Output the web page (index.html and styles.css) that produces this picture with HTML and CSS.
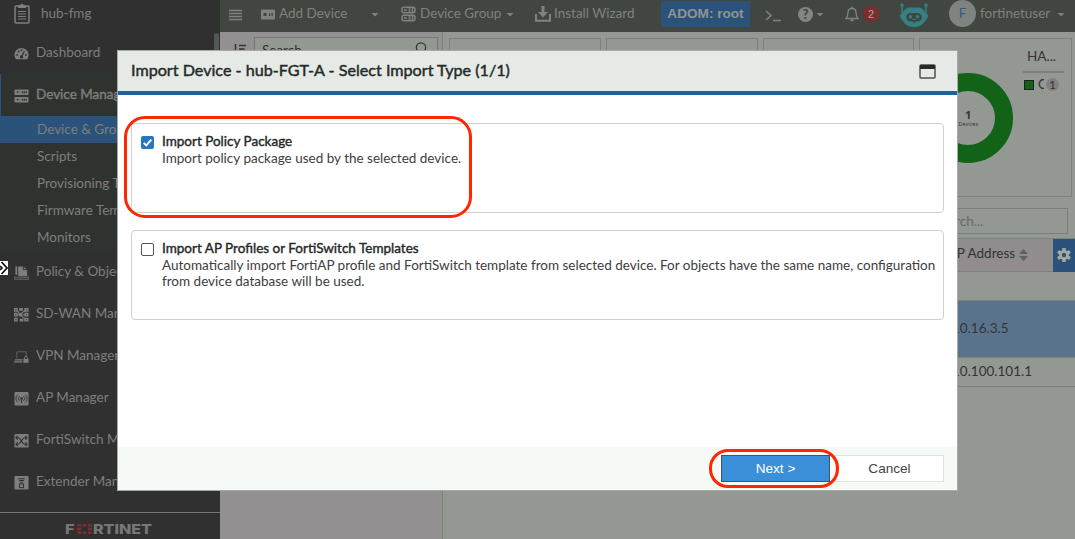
FILE: index.html
```
<!DOCTYPE html>
<html lang="en">
<head>
<meta charset="utf-8">
<title>hub-fmg</title>
<link rel="stylesheet" href="styles.css">
</head>
<body>
<div class="app">
  <aside class="sidebar">
    <div class="host">
      <svg class="host-icon" width="18" height="22" viewBox="0 0 18 22"><rect x="2" y="3" width="14" height="17" rx="1" fill="none" stroke="currentColor" stroke-width="1.5"/><path d="M5 5V2.5h2.2a1.8 1.8 0 0 1 3.6 0H13V5z" fill="currentColor"/><path d="M5 8.5h8M5 11h8M5 13.5h8M5 16h8" stroke="currentColor" stroke-width="1"/></svg>
      <span>hub-fmg</span>
    </div>
    <nav class="nav">
      <div class="nav-item"><svg class="nav-icon" viewBox="0 0 16 16"><path d="M2 14A7.5 7.5 0 1 1 14 14z" fill="currentColor"/><g fill="#303030"><circle cx="3.4" cy="9.5" r="1"/><circle cx="5" cy="5.8" r="1"/><circle cx="8" cy="4.2" r="1"/><circle cx="12.7" cy="9.5" r="1"/><circle cx="8" cy="11.6" r="1.8"/></g><path d="M8 11.5l3-6" stroke="#303030" stroke-width="1.3"/></svg><span>Dashboard</span></div>
      <div class="nav-item open"><svg class="nav-icon" viewBox="0 0 16 16"><rect x=".5" y="1.5" width="15" height="6" rx="1" fill="currentColor"/><rect x=".5" y="9.5" width="15" height="6" rx="1" fill="currentColor"/><path d="M3 4.5h2M3 12.5h2M9 3.5v2M11 3.5v2M13 3.5v2M9 11.5v2M11 11.5v2M13 11.5v2" stroke="#2f332f" stroke-width="1.3"/></svg><span>Device Manager</span></div>
      <div class="subnav">
        <div class="sub selected">Device &amp; Groups</div>
        <div class="sub">Scripts</div>
        <div class="sub">Provisioning Templates</div>
        <div class="sub">Firmware Templates</div>
        <div class="sub">Monitors</div>
      </div>
      <div class="nav-item"><svg class="nav-icon" viewBox="0 0 16 16"><path d="M1.500 1.500h2v9h-2zM4.500 1.500H10L14 5v7H4.500z" fill="currentColor"/><path d="M10 1.500V5h4" fill="none" stroke="#303030"/><path d="M.5 11.500v4h15v-4" fill="none" stroke="currentColor" stroke-width="1" opacity=".6"/><path d="M1 13.500h14" stroke="currentColor" stroke-width="1.500" opacity=".6"/></svg><span>Policy &amp; Objects</span></div>
      <div class="nav-item"><svg class="nav-icon" viewBox="0 0 16 16"><g fill="currentColor"><path d="M0 1h4v4H0zM5.500 1h4v3h-4zM11 1h4.500v4H11zM0 6.200h4v4H0zM11 6.200h4.500v4H11zM0 11.500h4v4H0zM6 12.500h4v3H6zM11 11.500h4.500v4H11z"/><circle cx="6.500" cy="8.200" r="2"/></g><path d="M6.500 8.200L12 3.500M6.500 8.200H12M6.500 8.200l5.500 5M3 3l3.500 5" stroke="currentColor" stroke-width="1.200"/><path d="M1.500 3h1M1.500 8.200h1M1.500 13.500h1M13 3h1M13 8.200h1M13 13.500h1" stroke="#303030" stroke-width="1.200"/></svg><span>SD-WAN Manager</span></div>
      <div class="nav-item"><svg class="nav-icon" viewBox="0 0 16 16"><path d="M3 10V3h10v5" fill="none" stroke="currentColor" opacity=".65"/><path d="M1 11h8v1.200H1zM0 13h9v1.500H0z" fill="currentColor"/><rect x="10" y="10.500" width="5.500" height="4.200" fill="currentColor"/><path d="M11.300 10.500V9.300a1.500 1.500 0 0 1 3 0v1.200" fill="none" stroke="currentColor"/></svg><span>VPN Manager</span></div>
      <div class="nav-item"><svg class="nav-icon" viewBox="0 0 16 16"><rect x=".5" y="1" width="15" height="14.500" rx="1" fill="currentColor"/><g fill="none" stroke="#303030" stroke-width="1"><circle cx="8" cy="8" r="1" fill="#303030"/><path d="M5.800 5.500a3.600 3.600 0 0 0 0 5M10.200 5.500a3.600 3.600 0 0 1 0 5M3.800 4a6 6 0 0 0 0 8M12.200 4a6 6 0 0 1 0 8M8 9v4"/></g></svg><span>AP Manager</span></div>
      <div class="nav-item"><svg class="nav-icon" viewBox="0 0 16 16"><rect x=".5" y="1" width="15" height="14.500" rx="1" fill="currentColor"/><path d="M2 5h2.500c2.500 0 4 7 7 7H14M2 12h2.500c2.500 0 4-7 7-7H14M12 3l2 2-2 2M12 10l2 2-2 2M4 3L2 5l2 2M4 10l-2 2 2 2" fill="none" stroke="#303030" stroke-width="1.100"/></svg><span>FortiSwitch Manager</span></div>
      <div class="nav-item"><svg class="nav-icon" viewBox="0 0 16 16"><rect x=".5" y="1" width="15" height="14.500" rx="1" fill="currentColor"/><path d="M4.500 4h7M5.500 6h5" stroke="#303030" stroke-width="1.100"/><path d="M6.500 7.500h3L8 9z" fill="#303030"/><rect x="5.800" y="9.500" width="4.400" height="4" fill="none" stroke="#303030"/></svg><span>Extender Manager</span></div>
    </nav>
    <div class="brand">
      <span class="brand-f">F</span><svg width="15" height="10" viewBox="0 0 15 10"><path d="M2 0h2.500v2.500H0V2a2 2 0 0 1 2-2zM6 0h3.500v2.500H6zM11 0h2a2 2 0 0 1 2 2v.5h-4zM0 3.800h4v2.500H0zM11 3.800h4v2.500h-4zM0 7.500h4.500V10H2a2 2 0 0 1-2-2zM6 7.500h3.500V10H6zM11 7.500h4V8a2 2 0 0 1-2 2h-2z" fill="#7c302c"/></svg><span class="brand-r">RTINET</span>
    </div>
    <div class="scroll-thumb"></div>
    <div class="edge-cursor"><svg width="9" height="14" viewBox="0 0 9 14"><path d="M1.500 1l5.500 6-5.500 6M0 5l2 2-2 2" fill="none" stroke="#111" stroke-width="1.700"/></svg></div>
  </aside>
  <main class="main">
    <header class="topbar">
      <svg class="burger" width="13" height="12" viewBox="0 0 13 12"><path d="M0 1.500h13M0 4.500h13M0 7.500h13M0 10.500h13" stroke="currentColor" stroke-width="1.300"/></svg>
      <div class="tool add"><svg width="14" height="11" viewBox="0 0 14 11"><rect y=".5" width="14" height="10" rx="1" fill="currentColor"/><path d="M2.500 4h3v3h-3zM8 4h1.300v3H8zM10.500 4h1.300v3h-1.300z" fill="#41463f"/></svg><span>Add Device</span><i class="caret"></i></div>
      <div class="tool group"><svg width="15" height="16" viewBox="0 0 15 16"><rect x="1" y="1.200" width="13" height="5.600" rx="2" fill="none" stroke="currentColor" stroke-width="1.500"/><rect x="1" y="9.200" width="13" height="5.600" rx="2" fill="none" stroke="currentColor" stroke-width="1.500"/><path d="M3 4h3M8.500 2v4M11.500 2v4M3 12h3M8.500 10v4M11.500 10v4" stroke="currentColor" stroke-width="1.500"/></svg><span>Device Group</span><i class="caret"></i></div>
      <div class="tool install"><svg width="16" height="16" viewBox="0 0 16 16"><path d="M1 8v6.800h14V8" fill="none" stroke="currentColor" stroke-width="2"/><path d="M6.500 0h3v6H13l-5 5.500L3 6h3.500z" fill="currentColor"/></svg><span>Install Wizard</span></div>
      <div class="adom">ADOM: root</div>
      <svg class="term" width="17" height="12" viewBox="0 0 17 12"><path d="M1 1l5 4.500L1 10M8 10.500h8" fill="none" stroke="currentColor" stroke-width="1.600"/></svg>
      <div class="help"><b>?</b><i class="caret"></i></div>
      <div class="alerts"><svg width="14" height="16" viewBox="0 0 14 16"><path d="M1 12.500c1.500-1.500 2-2.500 2-6C3 4 4.500 2.500 7 2.500S11 4 11 6.500c0 3.500.5 4.500 2 6z" fill="none" stroke="currentColor" stroke-width="1.300"/><path d="M7 .5v2" stroke="currentColor" stroke-width="1.500"/><path d="M5 13.500h4a2 2 0 0 1-4 0z" fill="currentColor"/></svg><span class="count">2</span></div>
      <svg class="bot" width="30" height="24" viewBox="0 0 30 24"><g fill="#358084"><circle cx="3" cy="2" r="1.800"/><circle cx="27" cy="2" r="1.800"/><path d="M2.300 3h1.500v9H2.300zM26.200 3h1.500v9h-1.500z"/><path d="M11 4.500h8c5 0 8 4.500 8 8.500 0 6-4 11-12 11S3 19 3 13c0-4 3-8.500 8-8.500z"/><path d="M.5 12.500l3-3v9zM29.500 12.500l-3-3v9z"/></g><path d="M11.500 10h7a4.300 4.300 0 0 1 0 8.600h-1.800l-2.700 2.200v-2.200h-2.500a4.300 4.300 0 0 1 0-8.600z" fill="#414641"/><circle cx="11.500" cy="13.800" r="1.700" fill="#358084"/><circle cx="18.500" cy="13.800" r="1.700" fill="#358084"/><path d="M13.300 16q1.700 1.500 3.400 0" fill="none" stroke="#358084"/></svg>
      <div class="user"><span class="avatar">F</span><span>fortinetuser</span><i class="caret"></i></div>
    </header>
    <div class="workspace">
      <section class="tree">
        <svg class="sort" width="12" height="12" viewBox="0 0 12 12"><path d="M1.500 0v12M5 1.500h7M5 5h5.500M5 8.500h3" stroke="#333" stroke-width="1.500"/></svg>
        <div class="tree-search"><span>Search...</span><svg width="12" height="13" viewBox="0 0 12 13"><circle cx="6" cy="5.500" r="4.700" fill="none" stroke="#333" stroke-width="1.200"/><path d="M9 9l3 3" stroke="#333"/></svg></div>
      </section>
      <section class="content">
        <div class="cards">
          <div class="card"></div><div class="card"></div><div class="card"></div>
          <div class="card ha">
            <svg class="donut" width="92" height="92" viewBox="0 0 92 92"><circle cx="46" cy="46" r="36" fill="none" stroke="#126218" stroke-width="18"/></svg>
            <div class="donut-label"><b>1</b><small>Devices</small></div>
            <div class="legend"><div class="legend-title">HA...</div><div class="legend-row"><i class="swatch"></i><span class="clip">C</span><span class="pill">1</span></div></div>
          </div>
        </div>
        <div class="filter"><div class="filter-input">Search...</div></div>
        <div class="thead"><span>IP Address</span><svg class="sorter" width="9" height="12" viewBox="0 0 9 12"><path d="M4.500 0L9 5H0zM4.500 12L0 7h9z" fill="#5f6360"/></svg><div class="gear"><svg width="14" height="14" viewBox="0 0 14 14"><g fill="#a3a8a3"><circle cx="7" cy="7" r="5"/><path d="M5.300 0h3.400v14H5.300z"/><path d="M5.300 0h3.400v14H5.300z" transform="rotate(60 7 7)"/><path d="M5.300 0h3.400v14H5.300z" transform="rotate(120 7 7)"/></g><circle cx="7" cy="7" r="2.200" fill="#2b527a"/></svg></div></div>
        <div class="row blank"></div>
        <div class="row active">10.16.3.5</div>
        <div class="row last">10.100.101.1</div>
      </section>
    </div>
  </main>
  <div class="dialog">
    <div class="dialog-head"><h1>Import Device - hub-FGT-A - Select Import Type (1/1)</h1><svg width="17" height="15" viewBox="0 0 17 15"><rect x="1" y="1" width="15" height="13" rx="1" fill="none" stroke="#4c514d" stroke-width="1.500"/><path d="M1 1h15v4H1z" fill="#252b28"/></svg></div>
    <div class="dialog-body">
      <div class="option"><span class="check on"><svg width="13" height="13" viewBox="0 0 13 13"><path d="M2.700 6.800l2.600 2.600 5-5.800" fill="none" stroke="#fff" stroke-width="1.900"/></svg></span><div><div class="option-title">Import Policy Package</div><p>Import policy package used by the selected device.</p></div></div>
      <div class="option"><span class="check"></span><div><div class="option-title">Import AP Profiles or FortiSwitch Templates</div><p>Automatically import FortiAP profile and FortiSwitch template from selected device. For objects have the same name, configuration<br>from device database will be used.</p></div></div>
    </div>
    <div class="dialog-foot"><button class="btn primary">Next &gt;</button><button class="btn">Cancel</button></div>
    <div class="mark mark-option"></div>
    <div class="mark mark-next"></div>
  </div>
</div>
</body>
</html>
```
FILE: styles.css
```
* { box-sizing: border-box; }
body { margin: 0; font: 13.5px/17px Lato, sans-serif; color: #333; }
svg { display: block; flex: none; }
.app { position: relative; display: flex; width: 1075px; height: 539px; overflow: hidden; }

.sidebar { position: relative; width: 220px; flex: none; display: flex; flex-direction: column; background: #303030; color: #7d7f7d; white-space: nowrap; }
.host { display: flex; align-items: center; gap: 10px; height: 32px; padding: 0 0 5px 13px; }
.nav { flex: 1; }
.nav-item { display: flex; align-items: center; gap: 7px; height: 42px; padding: 0 0 2px 14px; }
.nav-icon { width: 15px; height: 15px; margin-top: 3px; }
.nav-item.open { background: #2f332f; border-left: 1px solid #2b527a; padding-left: 13px; -webkit-text-stroke: .4px; }
.subnav { background: #2f332f; }
.sub { height: 27px; padding-left: 37px; line-height: 26px; }
.sub.selected { background: #2b527a; }
.brand { height: 27px; border-top: 1px solid #777; display: flex; align-items: center; padding: 6px 0 0 65px; font: 800 13.6px/14px Inter, sans-serif; color: #777; }
.brand-f { width: 12px; transform: scaleX(1.2); transform-origin: left; }
.brand-r { margin-left: 1px; transform: scaleX(1.18); transform-origin: left; }
.scroll-thumb { position: absolute; left: 214px; top: 33px; width: 5px; height: 150px; border-radius: 3px; background: #535853; }
.edge-cursor { position: absolute; left: 0; top: 261px; width: 8px; height: 14px; background: #fff; overflow: hidden; }

.main { flex: 1; min-width: 0; display: flex; flex-direction: column; }
.topbar { height: 32px; display: flex; align-items: center; background: #414641; color: #7f827f; padding: 0 10px 4px 9px; white-space: nowrap; }
.topbar span:not(.count) { margin-top: -1px; }
.burger { margin-top: 1px; }
.tool { display: flex; align-items: center; gap: 4px; }
.caret { flex: none; width: 8px; height: 4px; margin-top: 1px; background: currentColor; clip-path: polygon(0 0, 100% 0, 50% 100%); }
.add { margin-left: 19px; width: 118px; }
.add .caret { margin-left: auto; }
.group { margin-left: 22px; width: 113px; }
.group .caret { margin-left: auto; }
.install { margin-left: 21px; width: 101px; gap: 3px; }
.adom { margin-left: 25px; width: 89px; height: 26px; background: #2b527a; color: #8f9691; font: bold 13.6px/26px "Liberation Sans", sans-serif; text-align: center; }
.term { margin: 3px 0 0 15px; }
.help { margin-left: 16px; display: flex; align-items: center; gap: 3px; }
.help b { width: 15px; height: 15px; border-radius: 50%; background: #828582; color: #414641; text-align: center; font: 900 13px/15px Lato, sans-serif; }
.alerts { margin-left: 21px; display: flex; align-items: center; gap: 4px; }
.count { width: 16px; height: 16px; border-radius: 50%; background: #7e2d2a; color: #aaa; font: 11px/16px "Liberation Sans", sans-serif; text-align: center; }
.bot { margin: 1px 0 0 20px; }
.user { margin-left: 20px; display: flex; align-items: center; flex: 1; }
.avatar { flex: none; width: 27px; height: 27px; margin-right: 4px; border-radius: 50%; background: #808480; color: #355c80; text-align: center; line-height: 27px; }
.user .caret { margin-left: auto; }

.workspace { flex: 1; display: flex; min-height: 0; }
.tree { width: 223px; flex: none; background: #929090; border-right: 1px solid #7d817d; display: flex; align-items: flex-start; padding: 5px 4px 0 14px; gap: 8px; }
.sort { margin-top: 7px; }
.tree-search { flex: 1; height: 26px; border: 1px solid #747974; background: #939893; display: flex; justify-content: space-between; padding: 4px 10px 0 7px; line-height: 16px; }
.content { flex: 1; min-width: 0; background: #939893; }
.cards { display: flex; gap: 5px; padding: 6px 3px 0 6px; }
.card { width: 152px; height: 159px; border: 1px solid #7d817d; }
.ha { position: relative; width: 153px; display: flex; }
.donut { position: absolute; left: 2px; top: 33px; }
.donut-label { position: absolute; left: 28px; top: 68px; width: 40px; text-align: center; font: 11px/15px "Open Sans", sans-serif; color: #333; }
.donut-label b { display: block; }
.donut-label small { display: block; font-size: 5.5px; line-height: 5px; }
.legend { margin-left: auto; padding: 8px 7px 0 0; width: 48px; }
.legend-title { height: 26px; line-height: 18px; padding-left: 4px; border-bottom: 2px solid #7c7f7c; }
.legend-row { display: flex; align-items: center; padding-top: 3px; }
.swatch { flex: none; width: 10px; height: 10px; background: #126218; border: 1px solid #222; margin-left: 1px; }
.clip { flex: none; width: 6px; overflow: hidden; margin-left: 4px; }
.pill { flex: none; width: 13px; height: 13px; margin-left: 2px; border-radius: 50%; background: #858080; text-align: center; font-size: 12px; line-height: 13px; }
.filter { height: 41px; padding: 11px 7px 0 400px; }
.filter-input { height: 26px; border: 1px solid #7a7e7a; padding-left: 90px; line-height: 25px; color: #666b67; }
.thead { height: 34px; display: flex; align-items: center; border: solid #7d817d; border-width: 1px 0; background: #918d8e; padding-left: 510px; line-height: 15px; white-space: nowrap; }
.thead span { margin-top: -3px; }
.thead .sorter { margin-left: 4px; }
.gear { margin-left: auto; width: 22px; height: 33px; background: #2b527a; display: flex; align-items: center; justify-content: center; }
.row { padding-left: 509px; border-bottom: 1px solid #7d817d; }
.blank { height: 29px; }
.active { height: 57px; line-height: 54px; background: #5a738d; }
.last { height: 29px; line-height: 27px; }

.dialog { position: absolute; left: 117px; top: 50px; width: 841px; height: 441px; display: flex; flex-direction: column; background: #fff; border: 1px solid #a5aaa6; }
.dialog-head { height: 44px; display: flex; align-items: center; justify-content: space-between; padding: 0 21px 0 13px; background: #e5eae6; border-bottom: 4px solid #22609a; }
h1 { margin: 0 0 2px; font: 16.15px/20px Lato, sans-serif; color: #252a28; -webkit-text-stroke: .45px; }
.dialog-body { flex: 1; display: flex; flex-direction: column; gap: 17px; padding: 28px 13px 0; }
.option { height: 90px; border: 1px solid #cbd2cf; border-radius: 4px; padding: 9px 9px; display: flex; gap: 8px; white-space: nowrap; }
.check { width: 13px; height: 13px; margin-top: 3px; border: 1.5px solid #555; border-radius: 2px; flex: none; }
.check.on { border: 0; background: #2876c0; }
.option-title { color: #252a28; -webkit-text-stroke: .4px; }
p { margin: 0; line-height: 16px; color: #3d403e; }
.dialog-foot { height: 43px; background: #f5faf7; display: flex; justify-content: flex-end; gap: 5px; padding: 8px 13px; }
.btn { width: 109px; height: 27px; padding: 0; border: 1px solid #dfe2df; background: #fff; color: #444; font: 13.6px/24px "Liberation Sans", sans-serif; }
.primary { background: #3a8fd8; border-color: #425365; color: #fff; }
.mark { position: absolute; border: 3px solid #ff2600; }
.mark-option { left: 6px; top: 65px; width: 348px; height: 102px; border-radius: 21px; }
.mark-next { left: 591px; top: 398px; width: 130px; height: 39px; border-radius: 19px; }
```
